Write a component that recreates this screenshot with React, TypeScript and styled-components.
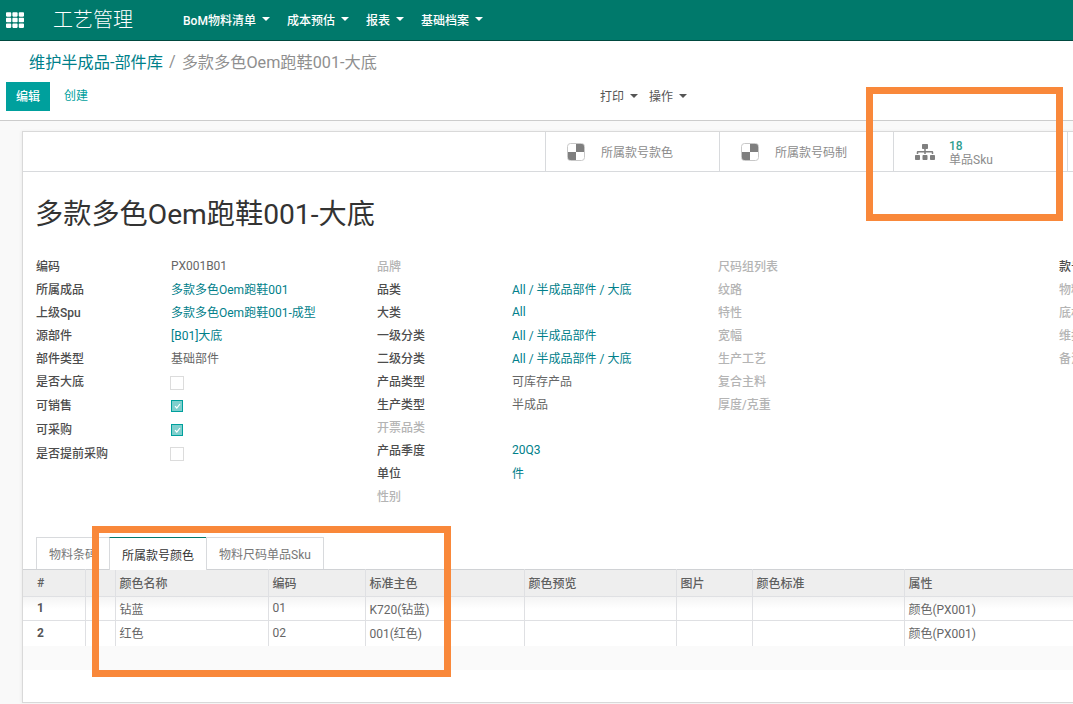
import React from "react";
import styled, { createGlobalStyle } from "styled-components";
import { FaSitemap, FaTh } from "react-icons/fa";

const Global = createGlobalStyle`
  html, body { margin: 0; padding: 0; background: #fff; }
  body { font-family: Roboto, "Noto Sans CJK SC", sans-serif; font-size: 12px; color: #666; }
  * { box-sizing: border-box; }
`;

const Page = styled.div`
  position: relative;
  width: 1073px;
  height: 704px;
  overflow: hidden;
  display: flex;
  flex-direction: column;
`;
const Navbar = styled.header`
  height: 41px;
  flex: none;
  display: flex;
  align-items: center;
  background: #00796b;
  border-bottom: 1px solid #00493f;
  color: #fff;
`;
const AppsButton = styled.span`
  width: 53px;
  padding-left: 6px;
  display: flex;
  align-items: center;
  font-size: 18px;
`;
const Brand = styled.span`
  width: 130px;
  font-size: 20px;
  line-height: 40px;
  font-weight: 300;
`;
const NavItem = styled.span`
  display: flex;
  align-items: center;
  gap: 6px;
  margin-right: 17px;
  padding-bottom: 2px;
  font-weight: 500;
  font-size: 12px;
`;
const Caret = styled.i<{ $color?: string }>`
  display: inline-block;
  width: 0;
  height: 0;
  border-left: 4px solid transparent;
  border-right: 4px solid transparent;
  border-top: 4px solid ${(p) => p.$color ?? "#fff"};
`;
const ControlPanel = styled.section`
  height: 80px;
  flex: none;
  padding: 9px 0 0 6px;
  background: #fff;
  border-bottom: 1px solid #ccc;
`;
const Breadcrumb = styled.div`
  height: 22px;
  margin-left: 23px;
  display: flex;
  align-items: center;
  gap: 6px;
  font-size: 16.2px;
  color: #8f8f8f;
  white-space: nowrap;
`;
const Crumb = styled.span`
  color: #00808a;
`;
const ActionRow = styled.div`
  height: 29px;
  margin-top: 10px;
  display: flex;
  align-items: center;
`;
const EditButton = styled.span`
  width: 44px;
  height: 29px;
  padding-bottom: 3px;
  background: #00a09d;
  color: #fff;
  font-weight: 500;
  display: flex;
  align-items: center;
  justify-content: center;
`;
const CreateButton = styled.span`
  margin-left: 14px;
  width: 536px;
  padding-bottom: 4px;
  color: #00a09d;
`;
const ActionMenu = styled.span`
  display: flex;
  align-items: center;
  gap: 6px;
  margin-right: 11px;
  padding-bottom: 2px;
  color: #555;
`;
const Content = styled.main`
  flex: 1;
  min-height: 0;
  padding: 10px 0 0 22px;
  background: #f9f9f9;
  overflow: hidden;
`;
const Sheet = styled.article`
  width: 1300px;
  height: 572px;
  background: #fff;
  border: 1px solid #d9d9d9;
  border-right: 0;
  box-shadow: -1px 0 3px rgba(0, 0, 0, 0.05);
`;
const ButtonBox = styled.div`
  height: 40px;
  padding-left: 522px;
  display: flex;
  border-bottom: 1px solid #d8dadd;
`;
const StatButton = styled.div`
  width: 174px;
  flex: none;
  display: flex;
  align-items: center;
  border-left: 1px solid #d8dadd;
  padding-left: 21px;
  color: #8c8c8c;
`;
const StatIcon = styled.span`
  width: 34px;
  flex: none;
  display: flex;
  align-items: center;
  color: #7f7f7f;
`;
const StatText = styled.span`
  display: flex;
  flex-direction: column;
  line-height: 14px;
  margin-top: 2px;
`;
const StatValue = styled.span`
  color: #2f9e8f;
  font-weight: 500;
`;
const Title = styled.h1`
  margin: 22px 0 0 12px;
  height: 42px;
  line-height: 42px;
  font-size: 28.2px;
  font-weight: 400;
  color: #333;
  white-space: nowrap;
`;
const FieldGrid = styled.div`
  margin: 18px 0 0 13px;
  height: 282px;
  display: grid;
  grid-template-columns: repeat(4, 341px);
  align-items: start;
`;
const FieldColumn = styled.div`
  display: flex;
  flex-direction: column;
`;
const Row = styled.div<{ $tall?: boolean }>`
  height: ${(p) => (p.$tall ? 24 : 23)}px;
  display: flex;
  align-items: center;
  white-space: nowrap;
`;
const Label = styled.span<{ $muted?: boolean }>`
  width: 135px;
  flex: none;
  font-weight: 500;
  color: ${(p) => (p.$muted ? "#b4b4b4" : "#4c4c4c")};
`;
const Value = styled.span<{ $link?: boolean }>`
  color: ${(p) => (p.$link ? "#00808a" : "#666")};
`;
const CheckBox = styled.span<{ $on?: boolean }>`
  width: ${(p) => (p.$on ? 12 : 14)}px;
  height: ${(p) => (p.$on ? 12 : 14)}px;
  margin: 4px 0 0 ${(p) => (p.$on ? 0 : -1)}px;
  display: flex;
  align-items: center;
  justify-content: center;
  border: 1px solid ${(p) => (p.$on ? "#00a09d" : "#dcdcdc")};
  background: ${(p) => (p.$on ? "#7fcfcd" : "#fff")};
`;
const Tabs = styled.div`
  height: 33px;
  margin-left: 13px;
  display: flex;
  align-items: flex-end;
`;
const Tab = styled.span<{ $active?: boolean }>`
  height: ${(p) => (p.$active ? 33 : 32)}px;
  padding: 0 12px;
  display: flex;
  align-items: center;
  background: #fff;
  border: 1px solid #d8dadd;
  border-top: ${(p) => (p.$active ? "1px solid #00796b" : "1px solid #d8dadd")};
  border-bottom: 0;
  margin-right: -1px;
  color: ${(p) => (p.$active ? "#333" : "#777")};
  margin-bottom: ${(p) => (p.$active ? -1 : 0)}px;
  position: relative;
  white-space: nowrap;
`;
const Table = styled.table`
  table-layout: fixed;
  width: 1289px;
  border-collapse: collapse;
  border-top: 1px solid #d0d2d5;
`;
const HeadCell = styled.th`
  height: 27px;
  padding: 0 3px 1px 4px;
  background: #eee;
  border-left: 1px solid #dfe0e3;
  border-bottom: 1px solid #dfe0e3;
  text-align: left;
  font-weight: 500;
  color: #5f5f5f;
  &:first-child { border-left: 0; padding-left: 14px; }
`;
const BodyRow = styled.tr<{ $shade?: boolean }>`
  background: ${(p) => (p.$shade ? "linear-gradient(#f4f4f4, #fff 12px)" : "#fff")};
`;
const BodyCell = styled.td`
  height: 24px;
  padding: 0 3px 1px 4px;
  border-left: 1px solid #dfe0e3;
  border-bottom: 1px solid #dfe0e3;
  color: #666;
  &:first-child { border-left: 0; padding-left: 14px; font-weight: 700; color: #555; }
`;
const LastRow = styled(BodyRow)`
  td { border-bottom: 0; height: 25px; }
`;
const Footer = styled.div`
  height: 24px;
  background: #fafafa;
`;
const Annotation = styled.div<{ $x: number; $y: number; $w: number; $h: number }>`
  position: absolute;
  left: ${(p) => p.$x}px;
  top: ${(p) => p.$y}px;
  width: ${(p) => p.$w}px;
  height: ${(p) => p.$h}px;
  border: 7px solid #f9883a;
  pointer-events: none;
`;

const Checker = () => (
  <svg width="18" height="18" viewBox="0 0 18 18">
    <rect x="0.5" y="0.5" width="17" height="17" rx="3" fill="#fff" stroke="#c8c8c8" />
    <path d="M9 1H15a2 2 0 0 1 2 2V9H9z" fill="#7f7f7f" />
    <path d="M1 9H9V17H3a2 2 0 0 1-2-2z" fill="#7f7f7f" />
  </svg>
);
const Tick = () => (
  <svg width="7" height="6" viewBox="0 0 7 6">
    <path d="M1 3.2 2.8 5 6 1" fill="none" stroke="#fff" strokeWidth="1.2" />
  </svg>
);

type Field = { l: string; v?: string; link?: boolean; muted?: boolean; check?: "on" | "off" };

const col1: Field[] = [
  { l: "编码", v: "PX001B01" },
  { l: "所属成品", v: "多款多色Oem跑鞋001", link: true },
  { l: "上级Spu", v: "多款多色Oem跑鞋001-成型", link: true },
  { l: "源部件", v: "[B01]大底", link: true },
  { l: "部件类型", v: "基础部件" },
  { l: "是否大底", check: "off" },
  { l: "可销售", check: "on" },
  { l: "可采购", check: "on" },
  { l: "是否提前采购", check: "off" },
];
const col2: Field[] = [
  { l: "品牌", muted: true },
  { l: "品类", v: "All / 半成品部件 / 大底", link: true },
  { l: "大类", v: "All", link: true },
  { l: "一级分类", v: "All / 半成品部件", link: true },
  { l: "二级分类", v: "All / 半成品部件 / 大底", link: true },
  { l: "产品类型", v: "可库存产品" },
  { l: "生产类型", v: "半成品" },
  { l: "开票品类", muted: true },
  { l: "产品季度", v: "20Q3", link: true },
  { l: "单位", v: "件", link: true },
  { l: "性别", muted: true },
];
const col3: Field[] = ["尺码组列表", "纹路", "特性", "宽幅", "生产工艺", "复合主料", "厚度/克重"].map((l) => ({ l, muted: true }));
const col4: Field[] = [
  { l: "款号" },
  { l: "物料", muted: true },
  { l: "底材", muted: true },
  { l: "维护", muted: true },
  { l: "备注", muted: true },
];

const Column = ({ fields }: { fields: Field[] }) => (
  <FieldColumn>
    {fields.map((f) => (
      <Row key={f.l} $tall={!!f.check && f.l !== "是否大底"}>
        <Label $muted={f.muted}>{f.l}</Label>
        {f.v && <Value $link={f.link}>{f.v}</Value>}
        {f.check && <CheckBox $on={f.check === "on"}>{f.check === "on" && <Tick />}</CheckBox>}
      </Row>
    ))}
  </FieldColumn>
);

const widths = [62, 30, 153, 97, 159, 152, 76, 152, 408];
const heads = ["#", "", "颜色名称", "编码", "标准主色", "颜色预览", "图片", "颜色标准", "属性"];

export default function App() {
  return (
    <Page>
      <Global />
      <Navbar>
        <AppsButton><FaTh /></AppsButton>
        <Brand>工艺管理</Brand>
        {["BoM物料清单", "成本预估", "报表", "基础档案"].map((t) => (
          <NavItem key={t}>{t}<Caret /></NavItem>
        ))}
      </Navbar>
      <ControlPanel>
        <Breadcrumb><Crumb>维护半成品-部件库</Crumb>/<span>多款多色Oem跑鞋001-大底</span></Breadcrumb>
        <ActionRow>
          <EditButton>编辑</EditButton>
          <CreateButton>创建</CreateButton>
          <ActionMenu>打印<Caret $color="#555" /></ActionMenu>
          <ActionMenu>操作<Caret $color="#555" /></ActionMenu>
        </ActionRow>
      </ControlPanel>
      <Content>
        <Sheet>
          <ButtonBox>
            <StatButton><StatIcon><Checker /></StatIcon>所属款号款色</StatButton>
            <StatButton><StatIcon><Checker /></StatIcon>所属款号码制</StatButton>
            <StatButton>
              <StatIcon><FaSitemap size={20} /></StatIcon>
              <StatText><StatValue>18</StatValue>单品Sku</StatText>
            </StatButton>
            <StatButton />
          </ButtonBox>
          <Title>多款多色Oem跑鞋001-大底</Title>
          <FieldGrid>
            <Column fields={col1} />
            <Column fields={col2} />
            <Column fields={col3} />
            <Column fields={col4} />
          </FieldGrid>
          <Tabs>
            <Tab>物料条码</Tab>
            <Tab $active>所属款号颜色</Tab>
            <Tab>物料尺码单品Sku</Tab>
          </Tabs>
          <Table>
            <colgroup>{widths.map((w, i) => <col key={i} width={w} />)}</colgroup>
            <thead>
              <tr>{heads.map((h, i) => <HeadCell key={i}>{h}</HeadCell>)}</tr>
            </thead>
            <tbody>
              <BodyRow $shade>
                {["1", "", "钻蓝", "01", "K720(钻蓝)", "", "", "", "颜色(PX001)"].map((c, i) => <BodyCell key={i}>{c}</BodyCell>)}
              </BodyRow>
              <LastRow>
                {["2", "", "红色", "02", "001(红色)", "", "", "", "颜色(PX001)"].map((c, i) => <BodyCell key={i}>{c}</BodyCell>)}
              </LastRow>
            </tbody>
          </Table>
          <Footer />
        </Sheet>
      </Content>
      <Annotation $x={866} $y={87} $w={197} $h={134} />
      <Annotation $x={92} $y={526} $w={359} $h={151} />
    </Page>
  );
}
